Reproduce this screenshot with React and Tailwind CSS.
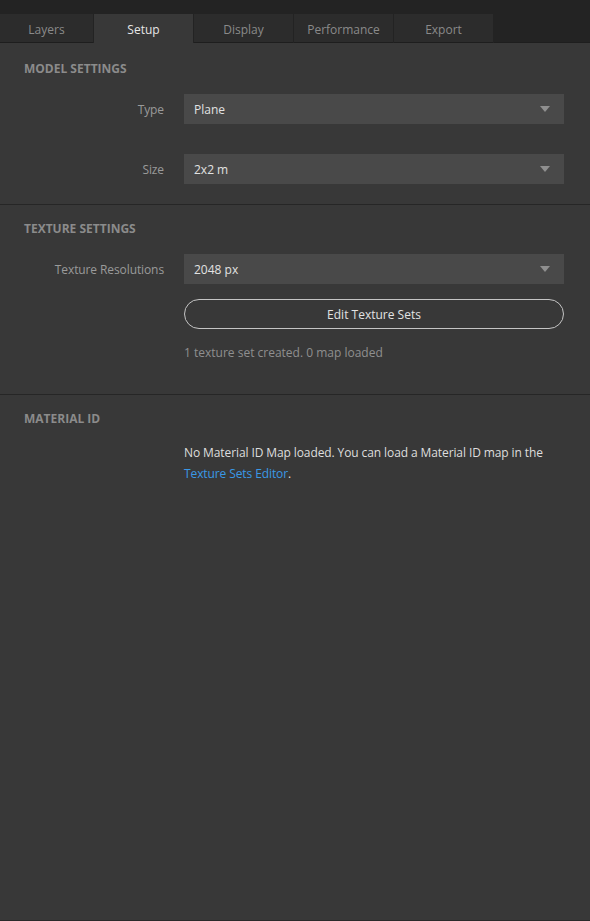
import React from "react";

const font = { fontFamily: '"Open Sans", "Noto Sans", sans-serif' };

function Select({ value }) {
  return (
    <div className="flex h-[30px] w-[380px] items-center justify-between bg-[#494949] pl-[10px] pr-[14px] text-[12px] text-[#e2e2e2]">
      <span className="pt-px">{value}</span>
      <svg width="10" height="6" viewBox="0 0 10 6">
        <polygon points="0,0 10,0 5,6" fill="#8f8f8f" />
      </svg>
    </div>
  );
}

function Row({ label, children }) {
  return (
    <div className="flex items-center">
      <div className="w-[164px] pt-px text-right text-[12px] tracking-[-0.1px] text-[#9a9a9a]">{label}</div>
      <div className="ml-[20px]">{children}</div>
    </div>
  );
}

function Header({ children }) {
  return (
    <div className="pl-[24px] text-[12px] font-bold uppercase leading-[16px] text-[#8b8b8b]">
      {children}
    </div>
  );
}

export default function App() {
  const tabs = [
    { t: "Layers", w: "w-[93px]" },
    { t: "Setup", w: "w-[99px]" },
    { t: "Display", w: "w-[99px]" },
    { t: "Performance", w: "w-[99px]" },
    { t: "Export", w: "w-[99px]" },
  ];
  return (
    <div style={font} className="flex h-[921px] w-[590px] flex-col bg-[#383838]">
      <div className="h-[14px] bg-[#232323]" />
      <div className="flex h-[29px] bg-[#232323]">
        {tabs.map((x, i) => (
          <div
            key={x.t}
            className={
              i === 1
                ? "mr-px flex w-[99px] items-center justify-center bg-[#383838] pt-[3px] text-[12px] text-[#e6e6e6]"
                : "mr-px flex items-center justify-center border-b border-[#1e1e1e] bg-[#2c2c2c] pt-[3px] text-[12px] text-[#8a8a8a] " + x.w
            }
          >
            {x.t}
          </div>
        ))}
        <div className="flex-1 border-b border-[#1e1e1e]" />
      </div>

      <div className="pt-[18px]">
        <Header>Model Settings</Header>
        <div className="mt-[17px] flex flex-col gap-[30px]">
          <Row label="Type"><Select value="Plane" /></Row>
          <Row label="Size"><Select value="2x2 m" /></Row>
        </div>
      </div>
      <div className="mt-[20px] h-px bg-[#262626]" />

      <div className="pt-[16px]">
        <Header>Texture Settings</Header>
        <div className="mt-[17px]">
          <Row label="Texture Resolutions"><Select value="2048 px" /></Row>
        </div>
        <div className="ml-[184px] mt-[15px] flex h-[30px] w-[380px] items-center justify-center rounded-full border border-[#c4c4c4] pt-px text-[12px] text-[#e2e2e2]">
          Edit Texture Sets
        </div>
        <div className="ml-[184px] mt-[15px] text-[12px] leading-[18px] text-[#8f8f8f]">
          1 texture set created. 0 map loaded
        </div>
      </div>
      <div className="mt-[32px] h-px bg-[#262626]" />

      <div className="pt-[16px]">
        <Header>Material ID</Header>
        <div className="ml-[184px] mt-[15px] w-[380px] text-[12px] leading-[21px] tracking-[-0.1px] text-[#dedede]">
          No Material ID Map loaded. You can load a Material ID map in the{" "}
          <span className="text-[#3a98e6]">Texture Sets Editor</span>.
        </div>
      </div>
      <div className="flex-1" />
      <div className="h-px bg-[#2a2a2a]" />
    </div>
  );
}
